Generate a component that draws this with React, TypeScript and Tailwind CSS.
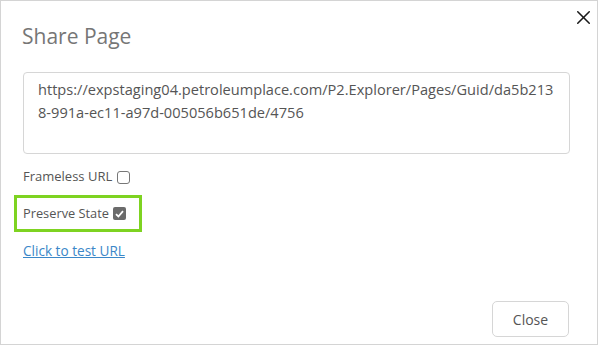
import { X } from "lucide-react";

export default function App() {
  const url =
    "https://expstaging04.petroleumplace.com/P2.Explorer/Pages/Guid/da5b2138-991a-ec11-a97d-005056b651de/4756";

  return (
    <div className="w-[599px] h-[346px] bg-white font-['Open_Sans',sans-serif]">
      <div className="relative w-[598px] h-[345px] border border-[#d4d4d4] bg-white flex flex-col">
        {/* Close icon */}
        <button className="absolute left-[571px] top-[5px] text-[#1a1a1a]" aria-label="Close">
          <X size={23} strokeWidth={1.6} />
        </button>

        {/* Header */}
        <div className="pl-[21px] pt-[21px] h-[71px]">
          <h1 className="text-[21px] leading-[28px] text-[#767676]">Share Page</h1>
        </div>

        {/* Body */}
        <div className="pl-[22px] pr-[28px] flex flex-col">
          <div className="w-[547px] h-[82px] border border-[#d6d6d6] rounded-[4px] pl-[14px] pr-[10px] pt-[5px] text-[14.6px] leading-[23px] text-[#555] break-all">
            {url}
          </div>

          <label className="mt-[14px] flex items-center h-[18px] text-[13px] text-[#555]">
            Frameless URL
            <span className="ml-[5px] w-[13px] h-[13px] border border-[#777] rounded-[3px] bg-white" />
          </label>

          <div className="-ml-[9px] mt-[9px] w-[128px] h-[37px] border-[3px] border-[#7ed321] flex items-center pl-[6px]">
            <label className="flex items-center text-[12.8px] text-[#555]">
              Preserve State
              <span className="ml-[4px] w-[13px] h-[13px] rounded-[2px] bg-[#6b6b6b] flex items-center justify-center">
                <svg width="9" height="8" viewBox="0 0 9 8" fill="none">
                  <path d="M1 4.2 L3.4 6.5 L8 1.2" stroke="white" strokeWidth="1.8" />
                </svg>
              </span>
            </label>
          </div>

          <a href="#" className="mt-[10px] text-[13.6px] leading-[18px] text-[#3b87c8] underline w-fit">
            Click to test URL
          </a>
        </div>

        {/* Footer */}
        <div className="mt-auto flex justify-end pr-[28px] pb-[7px]">
          <button className="w-[77px] h-[36px] border border-[#d6d6d6] rounded-[5px] text-[14px] text-[#555] bg-white">
            Close
          </button>
        </div>
      </div>
    </div>
  );
}
